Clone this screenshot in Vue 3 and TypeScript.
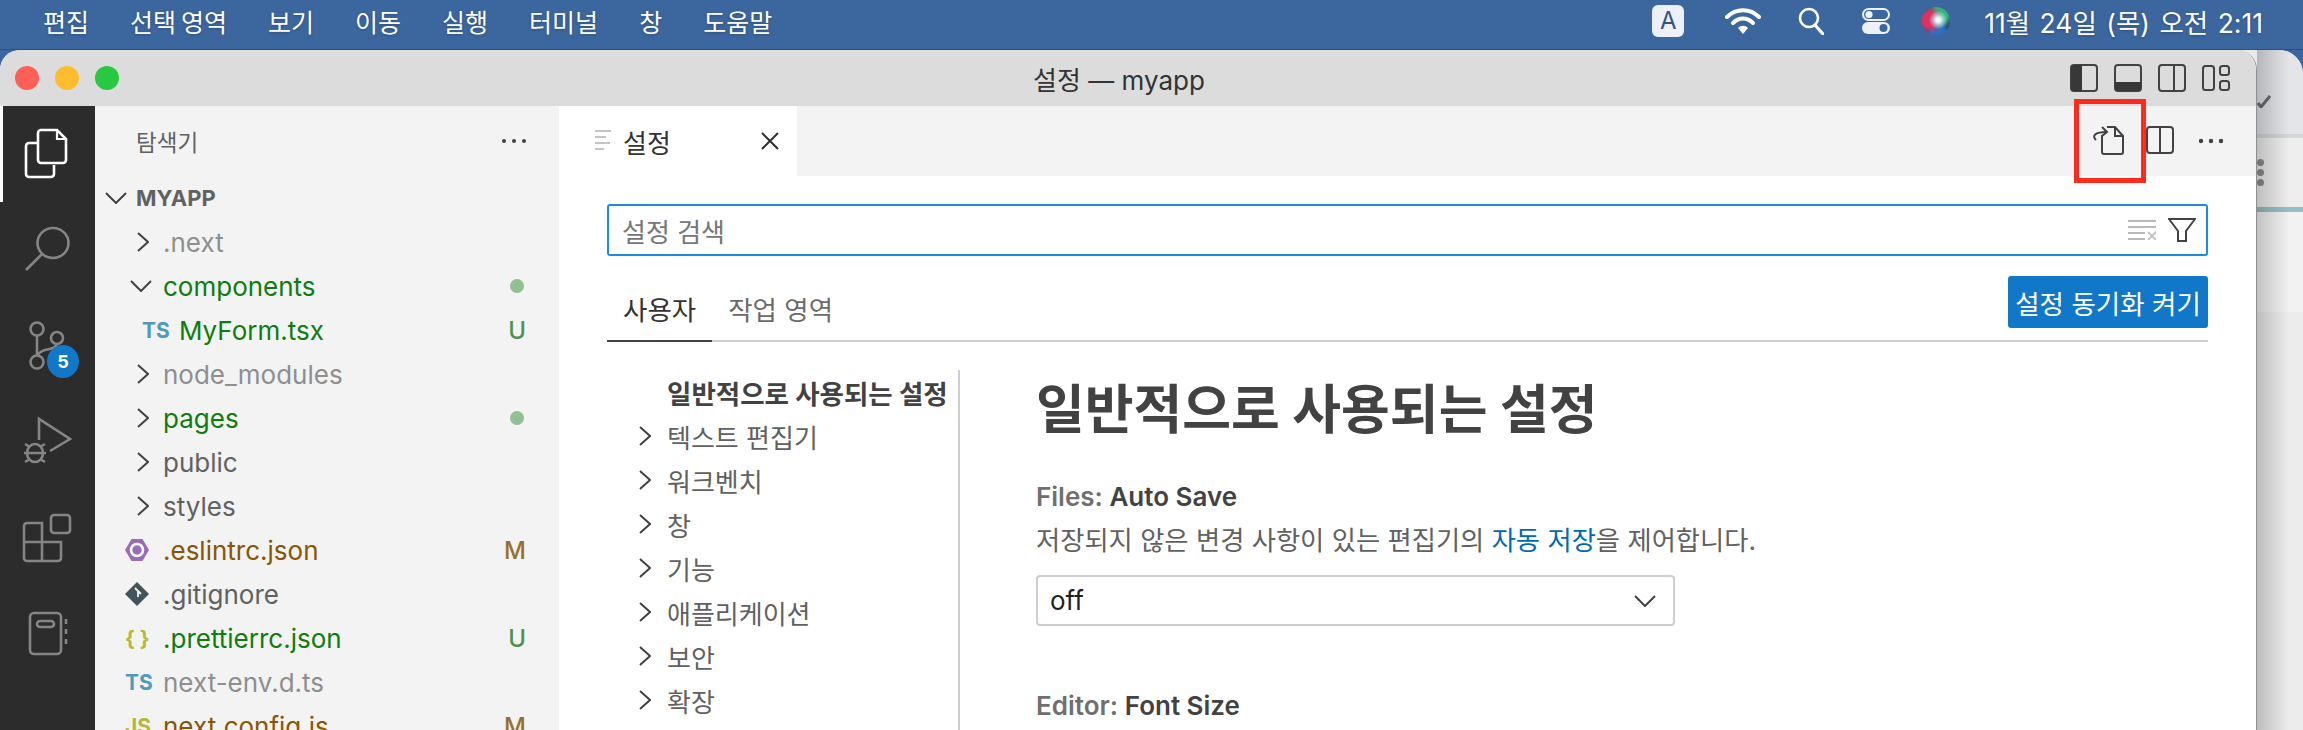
<script setup lang="ts">
interface Row {
  label: string
  tone: string
  kind: 'open' | 'closed' | 'file'
  icon?: string
  nested?: boolean
  mark?: string
}

const menus: string[] = ['편집', '선택 영역', '보기', '이동', '실행', '터미널', '창', '도움말']

const rows: Row[] = [
  { label: '.next', tone: 'ignored', kind: 'closed' },
  { label: 'components', tone: 'added', kind: 'open', mark: 'dot' },
  { label: 'MyForm.tsx', tone: 'added', kind: 'file', icon: 'TS', nested: true, mark: 'U' },
  { label: 'node_modules', tone: 'ignored', kind: 'closed' },
  { label: 'pages', tone: 'added', kind: 'closed', mark: 'dot' },
  { label: 'public', tone: 'plain', kind: 'closed' },
  { label: 'styles', tone: 'plain', kind: 'closed' },
  { label: '.eslintrc.json', tone: 'changed', kind: 'file', icon: 'eslint', mark: 'M' },
  { label: '.gitignore', tone: 'plain', kind: 'file', icon: 'git' },
  { label: '.prettierrc.json', tone: 'added', kind: 'file', icon: 'json', mark: 'U' },
  { label: 'next-env.d.ts', tone: 'ignored', kind: 'file', icon: 'TS' },
  { label: 'next.config.js', tone: 'changed', kind: 'file', icon: 'JS', mark: 'M' }
]

const toc: string[] = ['텍스트 편집기', '워크벤치', '창', '기능', '애플리케이션', '보안', '확장']
</script>

<template>
  <div class="screen">
    <header class="menubar">
      <nav class="menus">
        <span v-for="m in menus" :key="m">{{ m }}</span>
      </nav>
      <div class="status">
        <span class="input-badge">A</span>
        <svg class="st wifi" viewBox="0 0 36 28" width="36" height="28">
          <path d="M2 10C11 1 25 1 34 10" fill="none" stroke="#fff" stroke-width="4" stroke-linecap="round" />
          <path d="M8 16C14 10 22 10 28 16" fill="none" stroke="#fff" stroke-width="4" stroke-linecap="round" />
          <path d="M13 21C16 18 20 18 23 21L18 27Z" fill="#fff" />
        </svg>
        <svg class="st search" viewBox="0 0 26 28" width="26" height="28">
          <circle cx="11" cy="11" r="9" fill="none" stroke="#fff" stroke-width="2.6" />
          <path d="M17 18L25 27" stroke="#fff" stroke-width="3.2" stroke-linecap="round" />
        </svg>
        <svg class="st toggles" viewBox="0 0 30 28" width="30" height="28">
          <rect x="2" y="2" width="26" height="11" rx="5.500" fill="none" stroke="#eef2f8" stroke-width="2" />
          <circle cx="8" cy="7.500" r="3.600" fill="#eef2f8" />
          <rect x="1" y="15" width="28" height="12" rx="6" fill="#eef2f8" />
          <circle cx="22.500" cy="21" r="4" fill="#3c679e" />
        </svg>
        <span class="siri"></span>
        <span class="clock">11월 24일 (목) 오전  2:11</span>
      </div>
    </header>

    <div class="desktop">
      <section class="window">
        <div class="titlebar">
          <div class="lights"><i class="red"></i><i class="amber"></i><i class="green"></i></div>
          <div class="wintitle">설정 — myapp</div>
          <div class="layouts">
            <svg viewBox="0 0 28 28" width="28" height="28">
              <rect x="1" y="1" width="26" height="26" rx="3" class="ln" />
              <path d="M4 1H12V27H4A3 3 0 0 1 1 24V4A3 3 0 0 1 4 1Z" fill="#383838" />
            </svg>
            <svg viewBox="0 0 28 28" width="28" height="28">
              <rect x="1" y="1" width="26" height="26" rx="3" class="ln" />
              <path d="M1 18H27V24A3 3 0 0 1 24 27H4A3 3 0 0 1 1 24Z" fill="#383838" />
            </svg>
            <svg viewBox="0 0 28 28" width="28" height="28">
              <rect x="1" y="1" width="26" height="26" rx="3" class="ln" />
              <path d="M16 1V27" class="ln" />
            </svg>
            <svg viewBox="0 0 28 28" width="28" height="28">
              <rect x="1" y="2" width="11" height="24" rx="2.500" class="ln" />
              <rect x="18" y="2" width="9" height="9" rx="2.500" class="ln" />
              <rect x="18" y="17" width="9" height="9" rx="2.500" class="ln" />
            </svg>
          </div>
        </div>

        <div class="workbench">
          <aside class="activity">
            <div class="act active">
              <svg viewBox="0 0 95 96" width="95" height="96">
                <path d="M38 37H29A3 3 0 0 0 26 40V68A3 3 0 0 0 29 71H51A3 3 0 0 0 54 68V59" fill="none" stroke="#fff" stroke-width="2.600" />
                <path d="M41 24H57L66 33V54A3 3 0 0 1 63 57H41A3 3 0 0 1 38 54V27A3 3 0 0 1 41 24Z" fill="none" stroke="#fff" stroke-width="2.600" />
                <path d="M57 24V33H66" fill="none" stroke="#fff" stroke-width="2.200" />
              </svg>
            </div>
            <div class="act">
              <svg viewBox="0 0 95 96" width="95" height="96">
                <ellipse cx="53" cy="41" rx="15.500" ry="15" class="ai" />
                <path d="M42 52L26 68" class="ai" />
              </svg>
            </div>
            <div class="act">
              <svg viewBox="0 0 95 96" width="95" height="96">
                <circle cx="37" cy="31" r="6.500" class="ai" />
                <circle cx="57" cy="40" r="6" class="ai" />
                <circle cx="37" cy="64" r="6.500" class="ai" />
                <path d="M37 38V57M57 46C55 51 50 51 45 52C41 53 39 55 38 57" class="ai" />
              </svg>
              <span class="scm-badge">5</span>
            </div>
            <div class="act">
              <svg viewBox="0 0 95 96" width="95" height="96">
                <path d="M39 46V25L70 45L50 57" class="ai" />
                <ellipse cx="35" cy="59" rx="8" ry="9" class="ai" />
                <path d="M25 50L30 53M45 50L40 53M24 59H46M25 68L30 65M45 68L40 65" class="ai" />
              </svg>
            </div>
            <div class="act">
              <svg viewBox="0 0 95 96" width="95" height="96">
                <rect x="51" y="25" width="19" height="18" rx="3" class="ai" />
                <path d="M24 36A3 3 0 0 1 27 33H42V52H61V68A3 3 0 0 1 58 71H27A3 3 0 0 1 24 68ZM24 52H42V71" class="ai" />
              </svg>
            </div>
            <div class="act">
              <svg viewBox="0 0 95 96" width="95" height="96">
                <rect x="30" y="27" width="31" height="41" rx="4" class="ai" />
                <rect x="37" y="35" width="17" height="6" rx="3" class="ai" />
                <path d="M66 33V38M66 43V48M66 53V58" class="ai" />
              </svg>
            </div>
          </aside>

          <aside class="sidebar">
            <div class="side-head">
              <span>탐색기</span>
              <svg viewBox="0 0 28 8" width="28" height="8"><circle cx="4" cy="4" r="2" /><circle cx="14" cy="4" r="2" /><circle cx="24" cy="4" r="2" /></svg>
            </div>
            <div class="root">
              <svg viewBox="0 0 22 12" width="22" height="12"><path d="M1 1L11 11L21 1" class="chev" /></svg>
              <span>MYAPP</span>
            </div>
            <div v-for="r in rows" :key="r.label" class="row" :class="[r.tone, { nested: r.nested }]">
              <span class="lead">
                <svg v-if="r.kind === 'closed'" class="c-right" viewBox="0 0 12 20" width="12" height="20"><path d="M1 1L11 10L1 19" class="chev" /></svg>
                <svg v-else-if="r.kind === 'open'" class="c-down" viewBox="0 0 22 12" width="22" height="12"><path d="M1 1L11 11L21 1" class="chev" /></svg>
                <b v-else-if="r.icon === 'TS'" class="ficon ts">TS</b>
                <b v-else-if="r.icon === 'JS'" class="ficon js">JS</b>
                <b v-else-if="r.icon === 'json'" class="ficon js">{ }</b>
                <svg v-else-if="r.icon === 'eslint'" viewBox="0 0 24 24" width="24" height="24">
                  <path d="M6.500 1H17.500L24 12L17.500 23H6.500L0 12Z" fill="#9a6cb8" />
                  <circle cx="12" cy="12" r="6" fill="none" stroke="#fff" stroke-width="2.600" />
                </svg>
                <svg v-else-if="r.icon === 'git'" viewBox="0 0 24 24" width="24" height="24">
                  <path d="M12 0L24 12L12 24L0 12Z" fill="#41535b" />
                  <path d="M10 6L13 9V15M13 9L16 12" fill="none" stroke="#f3f3f3" stroke-width="1.800" />
                </svg>
              </span>
              <span class="name">{{ r.label }}</span>
              <i v-if="r.mark === 'dot'" class="dot"></i>
              <span v-else-if="r.mark" class="mark" :class="r.mark === 'U' ? 'u' : 'm'">{{ r.mark }}</span>
            </div>
          </aside>

          <main class="editor">
            <div class="tabbar">
              <div class="tab">
                <svg viewBox="0 0 18 26" width="18" height="26">
                  <path d="M1 3H17M1 9H12M1 15H16M1 21H10" stroke="#c4c4c4" stroke-width="2" fill="none" />
                </svg>
                <span class="tab-name">설정</span>
                <svg class="tab-x" viewBox="0 0 18 18" width="18" height="18"><path d="M1 1L17 17M17 1L1 17" stroke="#2e2e2e" stroke-width="2" /></svg>
              </div>
              <div class="actions">
                <span class="action highlighted">
                  <svg viewBox="0 0 52 70" width="52" height="70">
                    <path d="M20 29V46A2 2 0 0 0 22 48H39A2 2 0 0 0 41 46V30L33 21H25" class="ln" />
                    <path d="M33 21V30H41" class="ln" />
                    <path d="M14 34C10 30 12 26 25 26" class="ln" />
                    <path d="M20 21L25 26L20 30" class="ln" />
                  </svg>
                </span>
                <span class="action">
                  <svg viewBox="0 0 52 70" width="52" height="70">
                    <rect x="13" y="21" width="26" height="26" rx="3" class="ln" />
                    <path d="M26 21V47" class="ln" />
                  </svg>
                </span>
                <span class="action">
                  <svg viewBox="0 0 52 70" width="52" height="70">
                    <circle cx="15" cy="35" r="2.200" fill="#424242" /><circle cx="25" cy="35" r="2.200" fill="#424242" /><circle cx="35" cy="35" r="2.200" fill="#424242" />
                  </svg>
                </span>
              </div>
            </div>

            <div class="settings">
              <div class="searchbox">
                <span class="ph">설정 검색</span>
                <svg viewBox="0 0 28 20" width="28" height="20">
                  <path d="M0 1H28M0 7H28M0 13H17M0 19H17" stroke="#b9b9b9" stroke-width="2" fill="none" />
                  <path d="M20 12L28 20M28 12L20 20" stroke="#c4c4c4" stroke-width="2" fill="none" />
                </svg>
                <svg class="filter" viewBox="0 0 28 24" width="28" height="24">
                  <path d="M1 1H27L18 13V23H10V13Z" class="ln" />
                </svg>
              </div>

              <div class="scopes">
                <span class="scope on">사용자</span>
                <span class="scope">작업 영역</span>
                <button class="sync" type="button">설정 동기화 켜기</button>
              </div>

              <div class="columns">
                <nav class="toc">
                  <div class="toc-row strong">일반적으로 사용되는 설정</div>
                  <div v-for="t in toc" :key="t" class="toc-row">
                    <svg viewBox="0 0 12 20" width="12" height="20"><path d="M1 1L11 10L1 19" class="chev" /></svg>
                    <span>{{ t }}</span>
                  </div>
                </nav>
                <article class="content">
                  <h1>일반적으로 사용되는 설정</h1>
                  <div class="set-title first"><em>Files: </em>Auto Save</div>
                  <p class="desc">저장되지 않은 변경 사항이 있는 편집기의 <a>자동 저장</a>을 제어합니다.</p>
                  <div class="select">
                    <span>off</span>
                    <svg viewBox="0 0 22 12" width="22" height="12"><path d="M1 1L11 11L21 1" class="chev" /></svg>
                  </div>
                  <div class="set-title second"><em>Editor: </em>Font Size</div>
                </article>
              </div>
            </div>
          </main>
        </div>
      </section>

      <div class="behind">
        <div class="b-title"><svg viewBox="0 0 14 14" width="14" height="14"><path d="M1 9L4 13L13 2" fill="none" stroke="#6e6e70" stroke-width="3" /></svg></div>
        <div class="b-band"><i></i><i></i><i></i></div>
        <div class="b-teal"></div>
        <div class="b-pane"></div>
        <div class="b-foot"></div>
      </div>
    </div>
  </div>
</template>

<style scoped>
.screen {
  width: 2303px;
  height: 730px;
  overflow: hidden;
  display: flex;
  flex-direction: column;
  background: #3c679e;
  font-family: Inter, "Noto Sans CJK KR", sans-serif;
  color: #424242;
}
.menubar {
  flex: 0 0 50px;
  height: 50px;
  display: flex;
  align-items: center;
  justify-content: space-between;
  padding: 0 40px 7px 43px;
  box-sizing: border-box;
  background: #3c679e;
  border-bottom: 1px solid #2e4f7c;
  color: #fff;
  font-size: 25px;
  word-spacing: -2px;
  text-shadow: 0 1px 3px rgba(0, 0, 0, 0.25);
}
.menus {
  display: flex;
  gap: 41px;
}
.status {
  display: flex;
  align-items: center;
}
.input-badge {
  width: 32px;
  height: 32px;
  border-radius: 6px;
  background: #edf1f7;
  color: #2f5488;
  font-size: 24px;
  line-height: 32px;
  text-align: center;
  text-shadow: none;
}
.wifi { margin-left: 41px; }
.search { margin-left: 37px; }
.toggles { margin-left: 37px; }
.siri {
  width: 28px;
  height: 28px;
  margin-left: 31px;
  border-radius: 50%;
  background:
    radial-gradient(circle at 58% 46%, #f2f6fa 0 10%, rgba(180, 225, 235, 0.75) 22%, transparent 42%),
    radial-gradient(circle at 22% 45%, #e0305f 0 26%, transparent 56%),
    radial-gradient(circle at 70% 18%, #2fb57f 0 24%, transparent 52%),
    radial-gradient(circle at 55% 88%, #2c6fc4 0 22%, transparent 50%),
    #2d3b55;
}
.clock {
  margin-left: 34px;
  font-size: 26.5px;
  word-spacing: 2px;
  white-space: pre;
}
.desktop {
  flex: 1;
  display: flex;
  min-height: 0;
}
.window {
  width: 2257px;
  flex: 0 0 2257px;
  display: flex;
  flex-direction: column;
  border-radius: 20px 20px 0 0;
  overflow: hidden;
  border-right: 1px solid #8d8d8d;
  box-sizing: border-box;
  background: #fff;
  position: relative;
  z-index: 1;
}
.titlebar {
  flex: 0 0 56px;
  display: grid;
  grid-template-columns: 1fr auto 1fr;
  align-items: center;
  background: #dcdcdc;
  padding: 0 26px 0 8px;
}
.lights {
  display: flex;
  gap: 16px;
  padding-left: 7px;
}
.lights i {
  width: 24px;
  height: 24px;
  border-radius: 50%;
}
.red { background: #fe5f57; }
.amber { background: #febc2e; }
.green { background: #28c840; }
.wintitle {
  font-size: 26px;
  color: #333;
}
.layouts {
  justify-self: end;
  display: flex;
  gap: 16px;
}
.ln {
  fill: none;
  stroke: #424242;
  stroke-width: 2;
}
.workbench {
  flex: 1;
  display: flex;
  min-height: 0;
}
.activity {
  flex: 0 0 95px;
  background: #2c2c2c;
}
.act {
  height: 96px;
  position: relative;
}
.act svg { display: block; }
.active { box-shadow: inset 3px 0 0 #fff; }
.ai {
  fill: none;
  stroke: #858585;
  stroke-width: 2.6;
}
.scm-badge {
  position: absolute;
  left: 47px;
  top: 47px;
  width: 32px;
  height: 33px;
  border-radius: 50%;
  background: #1177c8;
  color: #fff;
  font-size: 18px;
  font-weight: 700;
  line-height: 33px;
  text-align: center;
}
.sidebar {
  flex: 0 0 464px;
  background: #f3f3f3;
  box-sizing: border-box;
}
.side-head {
  height: 70px;
  display: flex;
  align-items: center;
  justify-content: space-between;
  padding: 0 31px 0 41px;
  font-size: 22.5px;
  color: #616161;
}
.side-head svg { fill: #424242; }
.root {
  height: 44px;
  display: flex;
  align-items: center;
  gap: 9px;
  padding-left: 10px;
  font-size: 22px;
  font-weight: 700;
  color: #616161;
}
.chev {
  fill: none;
  stroke: #424242;
  stroke-width: 2;
}
.row {
  height: 44px;
  display: flex;
  align-items: center;
  font-size: 26px;
  padding-right: 33px;
}
.lead {
  width: 68px;
  flex: 0 0 68px;
  display: flex;
  align-items: center;
  justify-content: flex-end;
  padding-right: 14px;
  box-sizing: border-box;
}
.row.nested .lead {
  width: 85px;
  flex-basis: 85px;
}
.row.nested .name { margin-left: -1px; }
.c-down { margin-right: -3px; }
.ficon {
  font-size: 21px;
  font-weight: 700;
  width: 24px;
  text-align: center;
  white-space: nowrap;
}
.ts { color: #519aba; }
.js { color: #b7b73b; }
.name { flex: 1; }
.plain .name { color: #616161; }
.ignored .name { color: #8e8e90; }
.added .name { color: #107c10; }
.changed .name { color: #895503; }
.dot {
  width: 14px;
  height: 14px;
  margin-right: 2px;
  border-radius: 50%;
  background: #93bf94;
}
.mark { font-size: 24px; font-weight: 500; }
.mark.u { color: #4d9350; }
.mark.m { color: #96702a; }
.editor {
  flex: 1;
  min-width: 0;
  display: flex;
  flex-direction: column;
}
.tabbar {
  flex: 0 0 70px;
  display: flex;
  justify-content: space-between;
  background: #f3f3f3;
  padding-right: 18px;
}
.tab {
  width: 238px;
  background: #fff;
  display: flex;
  align-items: center;
  padding-left: 35px;
  box-sizing: border-box;
}
.tab-name {
  margin-left: 11px;
  font-size: 26px;
  color: #333;
}
.tab-x { margin-left: 90px; }
.actions { display: flex; }
.action { display: block; height: 70px; position: relative; }
.action svg { display: block; }
.highlighted::after {
  content: "";
  position: absolute;
  left: -8px;
  top: -7px;
  width: 72px;
  height: 84px;
  border: 5px solid #fe2a1c;
  box-sizing: border-box;
}
.settings {
  flex: 1;
  min-height: 0;
  padding: 28px 48px 0;
  background: #fff;
}
.searchbox {
  height: 52px;
  border: 2px solid #1a8ce6;
  border-radius: 3px;
  box-sizing: border-box;
  display: flex;
  align-items: center;
  padding: 0 10px 0 13px;
}
.ph {
  flex: 1;
  font-size: 26px;
  color: #767676;
}
.filter { margin-left: 12px; }
.scopes {
  height: 66px;
  margin-top: 20px;
  display: flex;
  border-bottom: 2px solid #cecece;
  box-sizing: border-box;
}
.scope {
  padding: 0 16px;
  margin-bottom: -2px;
  font-size: 26.5px;
  line-height: 68px;
  color: #6b6b6b;
}
.scope.on {
  color: #333;
  border-bottom: 2px solid #424242;
}
.sync {
  margin-left: auto;
  align-self: flex-start;
  width: 200px;
  height: 52px;
  padding: 0;
  border: 0;
  border-radius: 3px;
  background: #1177c8;
  color: #fff;
  font: inherit;
  font-size: 26.5px;
}
.columns {
  display: flex;
  margin-top: 28px;
}
.toc {
  flex: 0 0 353px;
  height: 400px;
  border-right: 2px solid #cecece;
  box-sizing: border-box;
}
.toc-row {
  height: 44px;
  display: flex;
  align-items: center;
  padding-left: 60px;
  font-size: 26px;
  color: #616161;
}
.toc-row svg { margin-left: -28px; margin-right: 16px; }
.strong {
  font-weight: 700;
  color: #424242;
  white-space: nowrap;
  font-size: 26.5px;
}
.content {
  padding-left: 76px;
  font-size: 26px;
}
h1 {
  margin: 0;
  font-size: 53px;
  font-weight: 700;
  line-height: 80px;
  color: #424242;
}
.set-title {
  font-weight: 600;
  line-height: 36px;
  color: #424242;
}
.set-title em {
  font-style: normal;
  color: #6f6f6f;
}
.first { margin-top: 29px; }
.second { margin-top: 62px; }
.desc {
  margin: 8px 0 0;
  line-height: 36px;
  font-size: 26.3px;
  color: #616161;
}
.desc a { color: #006ab1; }
.select {
  width: 639px;
  height: 51px;
  margin-top: 16px;
  border: 2px solid #cecece;
  border-radius: 4px;
  box-sizing: border-box;
  display: flex;
  align-items: center;
  justify-content: space-between;
  padding: 0 17px 0 12px;
  color: #1f1f1f;
}
.behind {
  flex: 1;
  min-width: 0;
  margin-left: -20px;
  padding-left: 20px;
  border-radius: 0 24px 0 0;
  overflow: hidden;
  position: relative;
  display: flex;
  flex-direction: column;
  background: #e9e9e9;
}
.behind::after {
  content: "";
  position: absolute;
  inset: 0 0 0 20px;
  background: linear-gradient(90deg, rgba(0, 0, 0, 0.2), rgba(0, 0, 0, 0) 70%);
}
.b-title {
  flex: 0 0 84px;
  background: #e4e5e9;
  display: flex;
  align-items: flex-start;
  padding-top: 44px;
  box-sizing: border-box;
}
.b-band {
  flex: 0 0 73px;
  background: #eeeeee;
  border-top: 4px solid #d4d6da;
  box-sizing: border-box;
  padding-top: 21px;
  display: flex;
  flex-direction: column;
  gap: 3px;
}
.b-band i {
  width: 7px;
  height: 7px;
  border-radius: 50%;
  background: #8d8d8d;
}
.b-teal {
  flex: 0 0 5px;
  background: #96c0c6;
}
.b-pane {
  flex: 0 0 100px;
  background: #f2f2f2;
}
.b-foot {
  flex: 1;
  background: #ececec;
}
</style>

<style>
html, body { margin: 0; padding: 0; background: #3c679e; }
</style>
